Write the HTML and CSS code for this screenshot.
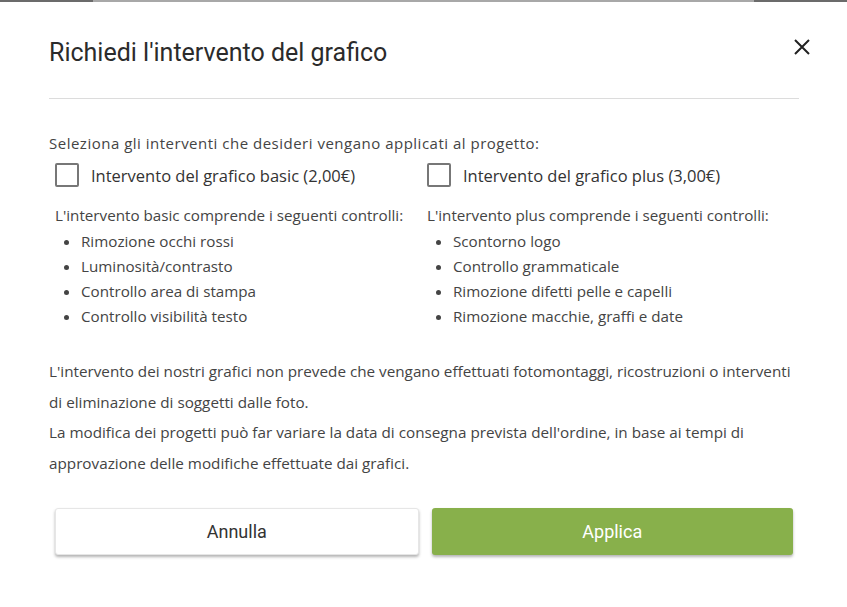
FILE: index.html
```html
<!DOCTYPE html>
<html>
<head>
    <title>Richiedi l'intervento del grafico</title>
    <meta name="viewport" content="width=device-width, initial-scale=1.0">
    <link rel="stylesheet" href="styles.css">
</head>
<body>
    <div class="backdrop-strip">
        <span class="strip-dark"></span>
        <span class="strip-light"></span>
        <span class="strip-dark"></span>
    </div>

    <div class="modal">
        <div class="modal-header">
            <h2>Richiedi l'intervento del grafico</h2>
            <button class="close-btn" aria-label="Chiudi">
                <svg width="16" height="16" viewBox="0 0 16 16">
                    <path d="M1 1 L15 15 M15 1 L1 15" stroke="#222" stroke-width="2" fill="none"/>
                </svg>
            </button>
        </div>

        <div class="modal-body">
            <p class="intro">Seleziona gli interventi che desideri vengano applicati al progetto:</p>

            <div class="options">
                <div class="option">
                    <label class="check-row">
                        <span class="checkbox"></span>
                        <span class="check-label">Intervento del grafico basic (2,00€)</span>
                    </label>
                    <p class="option-desc">L'intervento basic comprende i seguenti controlli:</p>
                    <ul>
                        <li>Rimozione occhi rossi</li>
                        <li>Luminosità/contrasto</li>
                        <li>Controllo area di stampa</li>
                        <li>Controllo visibilità testo</li>
                    </ul>
                </div>
                <div class="option">
                    <label class="check-row">
                        <span class="checkbox"></span>
                        <span class="check-label">Intervento del grafico plus (3,00€)</span>
                    </label>
                    <p class="option-desc">L'intervento plus comprende i seguenti controlli:</p>
                    <ul>
                        <li>Scontorno logo</li>
                        <li>Controllo grammaticale</li>
                        <li>Rimozione difetti pelle e capelli</li>
                        <li>Rimozione macchie, graffi e date</li>
                    </ul>
                </div>
            </div>

            <p class="note">
                L'intervento dei nostri grafici non prevede che vengano effettuati fotomontaggi, ricostruzioni o interventi di eliminazione di soggetti dalle foto.<br>
                La modifica dei progetti può far variare la data di consegna prevista dell'ordine, in base ai tempi di approvazione delle modifiche effettuate dai grafici.
            </p>
        </div>

        <div class="modal-actions">
            <button class="btn btn-cancel">Annulla</button>
            <button class="btn btn-apply">Applica</button>
        </div>
    </div>
</body>
</html>
```

FILE: styles.css
```css
/* base */
body {
    margin: 0;
    background: #fff;
    font-family: 'Open Sans', 'Noto Sans', sans-serif;
    color: #444;
    width: 847px;
    height: 607px;
    overflow: hidden;
}

.backdrop-strip {
    display: flex;
    height: 2px;
}

.strip-dark {
    width: 93px;
    background: #6b6b6b;
}

.strip-light {
    flex: 1;
    background: #a8a8a8;
}

/* modal */
.modal {
    padding: 0 48px 0 49px;
}

.modal-header {
    display: flex;
    justify-content: space-between;
    align-items: center;
    height: 92px;
    padding-top: 4px;
    border-bottom: 1px solid #dcdcdc;
}

.modal-header h2 {
    margin: 0;
    font-family: 'Roboto', sans-serif;
    font-weight: 400;
    font-size: 25px;
    color: #2b2b2b;
}

.close-btn {
    background: none;
    border: none;
    padding: 0;
    margin-right: -11px;
    margin-bottom: 10px;
    cursor: pointer;
    display: flex;
}

.modal-body {
    padding-top: 35px;
}

.intro {
    margin: 0;
    font-size: 15px;
    letter-spacing: 0.5px;
    line-height: 18px;
}

.options {
    display: grid;
    grid-template-columns: 372px 1fr;
    padding-left: 6px;
    margin-top: 11px;
}

.check-row {
    display: flex;
    align-items: center;
    gap: 12px;
}

.checkbox {
    width: 20px;
    height: 20px;
    border: 2px solid #777;
    border-radius: 2px;
}

.check-label {
    font-size: 16.5px;
    color: #333;
}

.option-desc {
    margin: 18px 0 4px;
    font-size: 15.2px;
    line-height: 20px;
}

ul {
    margin: 0;
    padding-left: 26px;
    font-size: 15.2px;
    line-height: 25px;
}

.note {
    margin: 27px 0 0 0;
    font-size: 15.25px;
    line-height: 30.7px;
    color: #444;
}

/* buttons */
.modal-actions {
    display: flex;
    gap: 13px;
    margin-top: 29px;
    padding: 0 6px;
}

.btn {
    flex: 1;
    height: 47px;
    border: none;
    border-radius: 3px;
    font-family: 'Roboto', sans-serif;
    font-size: 18px;
    cursor: pointer;
    box-shadow: 0 2px 3px rgba(0, 0, 0, 0.3);
}

.btn-cancel {
    background: #fff;
    color: #333;
    border: 1px solid #e6e6e6;
}

.btn-apply {
    background: #88b04b;
    color: #fff;
}
```
